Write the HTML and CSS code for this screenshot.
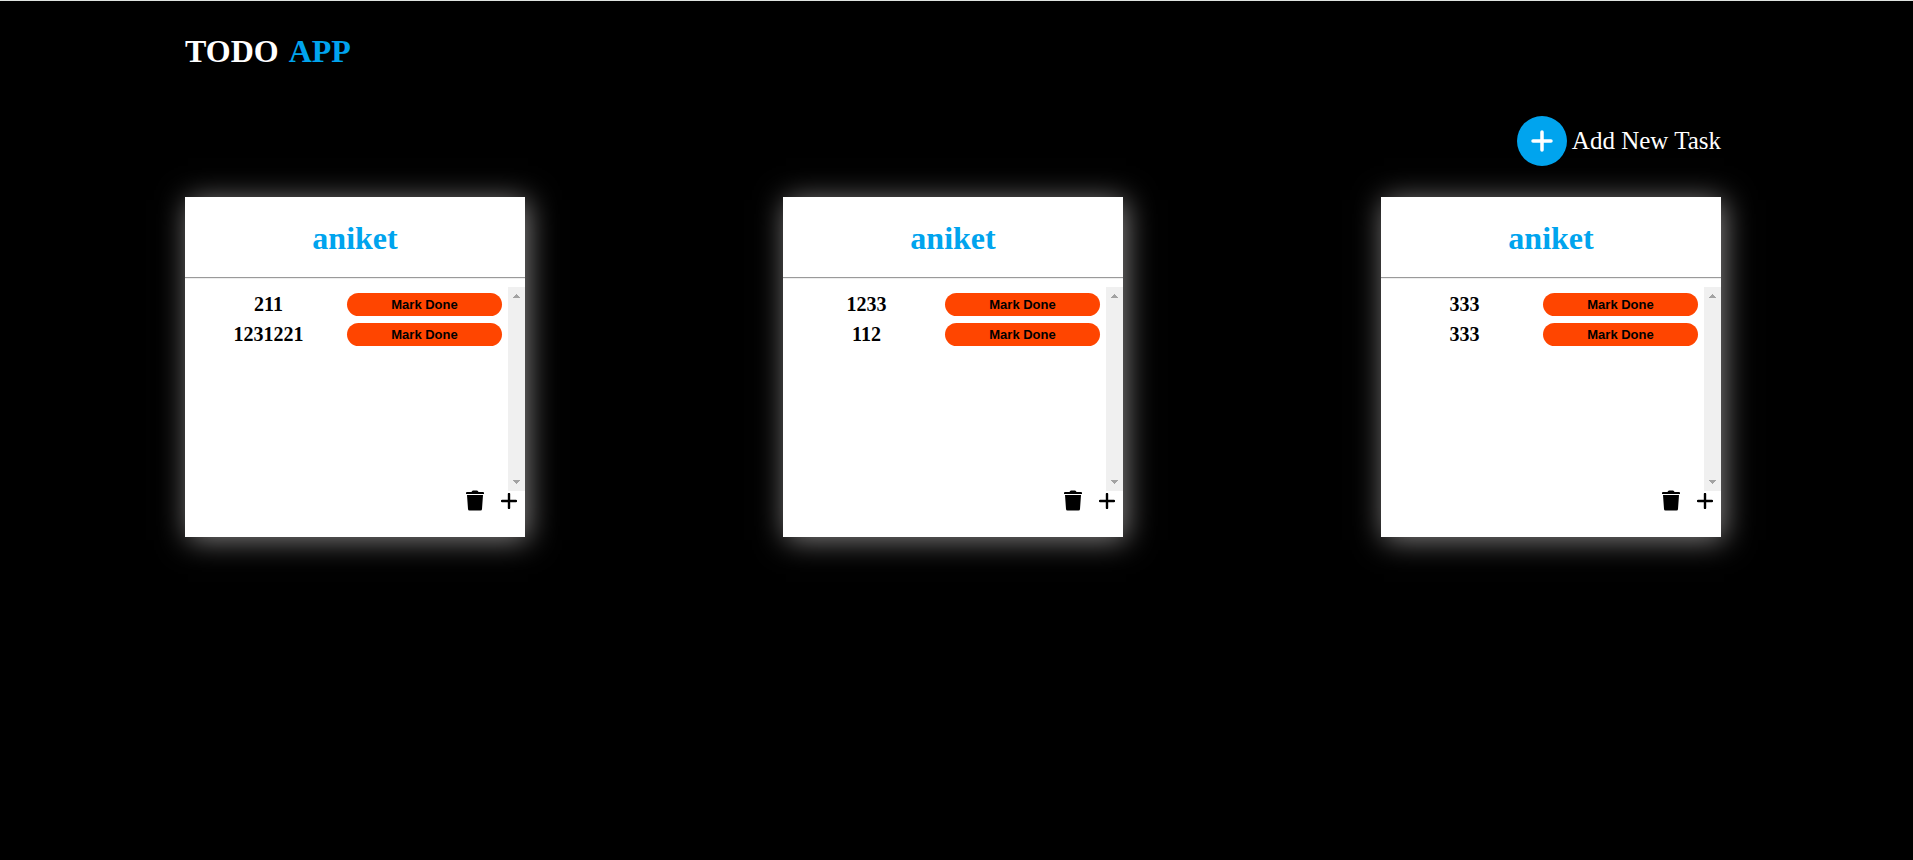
FILE: index.html
```
<!DOCTYPE html>
<html lang="en">
<head>
<meta charset="utf-8">
<title>Todo App</title>
<link rel="stylesheet" href="styles.css">
</head>
<body>
<svg class="sprite" aria-hidden="true">
  <symbol id="trash" viewBox="0 0 18 21">
    <path d="M1 2h4.500q.5-1.500 1.500-1.500h4q1 0 1.500 1.500H17q1 0 1 1v1H0V3q0-1 1-1z"/>
    <path d="M1 5h16l-1 14q0 1.500-1.500 1.500h-11q-1.500 0-1.500-1.500z"/>
  </symbol>
  <symbol id="plus" viewBox="0 0 16 16">
    <path d="M8 1v14M1 8h14" fill="none" stroke="currentColor" stroke-width="2.400" stroke-linecap="round"/>
  </symbol>
  <symbol id="up" viewBox="0 0 7 4"><path d="M3 0h1v1h1v1h1v1h1v1H0V3h1V2h1V1h1z"/></symbol>
  <symbol id="down" viewBox="0 0 7 4"><path d="M0 0h7v1H6v1H5v1H4v1H3V3H2V2H1V1H0z"/></symbol>
</svg>
<header class="header">
  <h1 class="brand"><span>TODO</span> <span class="accent">APP</span></h1>
</header>
<main class="main">
  <div class="toolbar">
    <button class="new-task" type="button">
      <span class="new-icon"><svg viewBox="0 0 22 22" aria-hidden="true"><path d="M11 2v18M2 11h18"/></svg></span>
      Add New Task
    </button>
  </div>
  <div class="cards">
    <section class="card">
      <h2 class="title">aniket</h2>
      <div class="body">
        <ul class="list">
          <li class="item"><span class="name">211</span><button class="done" type="button">Mark Done</button></li>
          <li class="item"><span class="name">1231221</span><button class="done" type="button">Mark Done</button></li>
        </ul>
        <div class="track" aria-hidden="true"><svg class="arrow"><use href="#up"/></svg><svg class="arrow"><use href="#down"/></svg></div>
      </div>
      <div class="actions">
        <button class="icon" type="button" aria-label="Delete list"><svg class="trash"><use href="#trash"/></svg></button>
        <button class="icon" type="button" aria-label="Add item"><svg class="plus"><use href="#plus"/></svg></button>
      </div>
    </section>
    <section class="card">
      <h2 class="title">aniket</h2>
      <div class="body">
        <ul class="list">
          <li class="item"><span class="name">1233</span><button class="done" type="button">Mark Done</button></li>
          <li class="item"><span class="name">112</span><button class="done" type="button">Mark Done</button></li>
        </ul>
        <div class="track" aria-hidden="true"><svg class="arrow"><use href="#up"/></svg><svg class="arrow"><use href="#down"/></svg></div>
      </div>
      <div class="actions">
        <button class="icon" type="button" aria-label="Delete list"><svg class="trash"><use href="#trash"/></svg></button>
        <button class="icon" type="button" aria-label="Add item"><svg class="plus"><use href="#plus"/></svg></button>
      </div>
    </section>
    <section class="card">
      <h2 class="title">aniket</h2>
      <div class="body">
        <ul class="list">
          <li class="item"><span class="name">333</span><button class="done" type="button">Mark Done</button></li>
          <li class="item"><span class="name">333</span><button class="done" type="button">Mark Done</button></li>
        </ul>
        <div class="track" aria-hidden="true"><svg class="arrow"><use href="#up"/></svg><svg class="arrow"><use href="#down"/></svg></div>
      </div>
      <div class="actions">
        <button class="icon" type="button" aria-label="Delete list"><svg class="trash"><use href="#trash"/></svg></button>
        <button class="icon" type="button" aria-label="Add item"><svg class="plus"><use href="#plus"/></svg></button>
      </div>
    </section>
  </div>
</main>
</body>
</html>
```

FILE: styles.css
```
* { box-sizing: border-box; }
html { background: #000; }
body {
  margin: 0;
  min-height: 100vh;
  padding: 0 192px 0 185px;
  border-top: 1px solid #dfe3e0;
  color: #fff;
  font-family: "Liberation Serif", "Times New Roman", serif;
}
button { font: inherit; color: inherit; border: 0; padding: 0; background: none; cursor: pointer; }
.sprite { position: absolute; width: 0; height: 0; }
.header { padding: 32px 0 0; }
.brand { display: flex; gap: 10px; margin: 0; font-size: 32px; line-height: 37px; }
.accent { color: #00a4ee; }
.toolbar { display: flex; justify-content: flex-end; padding: 46px 0 31px; }
.new-task { display: flex; align-items: center; gap: 5px; font-size: 25px; line-height: 28px; }
.new-icon {
  display: flex;
  align-items: center;
  justify-content: center;
  width: 50px;
  height: 50px;
  border-radius: 50%;
  background: #00a4ee;
}
.new-icon svg { width: 22px; height: 22px; fill: none; stroke: #fff; stroke-width: 3.5; stroke-linecap: round; }
.cards { display: flex; flex-wrap: wrap; justify-content: space-between; gap: 40px; }
.card {
  width: 340px;
  padding-bottom: 27px;
  background: #fff;
  color: #000;
  box-shadow: 3px 3px 28px #858383;
}
.title {
  margin: 0;
  padding: 23px 0 20px;
  border-bottom: 1px solid #9a9a9a;
  color: #00a4ee;
  font-size: 32px;
  line-height: 37px;
  text-align: center;
}
.body { display: flex; height: 213px; padding-top: 8px; border-top: 1px solid #eee; }
.list {
  flex: 1;
  display: flex;
  flex-direction: column;
  gap: 7px;
  margin: 0;
  padding: 6px 6px 0 5px;
  list-style: none;
}
.item { display: grid; grid-template-columns: 1fr 155px; align-items: center; }
.name { font-size: 20px; font-weight: 700; line-height: 23px; text-align: center; }
.done {
  height: 23px;
  border-radius: 12px;
  background: #ff4500;
  color: #000;
  font-family: "Liberation Sans", Arial, sans-serif;
  font-size: 13px;
  font-weight: 700;
}
.track {
  display: flex;
  flex-direction: column;
  align-items: center;
  justify-content: space-between;
  width: 17px;
  padding: 7px 0;
  background: #f0f0f0;
}
.arrow { width: 7px; height: 4px; fill: #a3a3a3; }
.actions { display: flex; align-items: center; justify-content: flex-end; gap: 17px; height: 19px; padding-right: 8px; }
.icon { display: flex; }
.trash { width: 18px; height: 21px; }
.plus { width: 16px; height: 16px; }
```
